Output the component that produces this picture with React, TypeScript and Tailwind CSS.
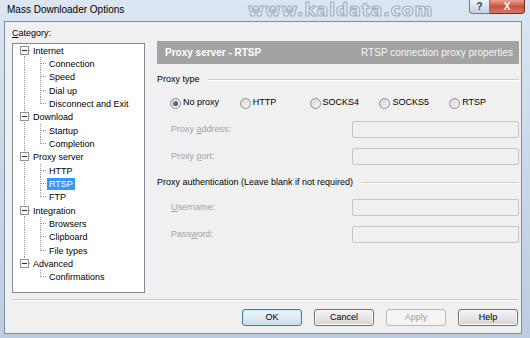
import React from "react";

type TreeNode = {
  label: string;
  level: 0 | 1;
  first?: boolean;
  last?: boolean;
  lastChild?: boolean;
  inLast?: boolean;
  selected?: boolean;
};

const nodes: TreeNode[] = [
  { label: "Internet", level: 0, first: true },
  { label: "Connection", level: 1 },
  { label: "Speed", level: 1 },
  { label: "Dial up", level: 1 },
  { label: "Disconnect and Exit", level: 1, lastChild: true },
  { label: "Download", level: 0 },
  { label: "Startup", level: 1 },
  { label: "Completion", level: 1, lastChild: true },
  { label: "Proxy server", level: 0 },
  { label: "HTTP", level: 1 },
  { label: "RTSP", level: 1, selected: true },
  { label: "FTP", level: 1, lastChild: true },
  { label: "Integration", level: 0 },
  { label: "Browsers", level: 1 },
  { label: "Clipboard", level: 1 },
  { label: "File types", level: 1, lastChild: true },
  { label: "Advanced", level: 0, last: true },
  { label: "Confirmations", level: 1, lastChild: true, inLast: true },
];

const dot = { stroke: "#9a9a9a", strokeWidth: 1, strokeDasharray: "1 1" };

const TreeRow = ({ n }: { n: TreeNode }) => (
  <div className="flex h-[13.33px] items-center">
    {n.level === 0 ? (
      <svg width="18" height="14" className="shrink-0" shapeRendering="crispEdges">
        <line x1="11.5" y1={n.first ? 6 : 0} x2="11.5" y2={n.last ? 7 : 14} {...dot} />
        <line x1="16" y1="6.5" x2="18" y2="6.5" {...dot} />
        <rect x="7.5" y="2.5" width="8" height="8" fill="#fbfbfb" stroke="#919191" />
        <line x1="9" y1="6.5" x2="14" y2="6.5" stroke="#1f2f4a" />
      </svg>
    ) : (
      <svg width="34" height="14" className="shrink-0" shapeRendering="crispEdges">
        {!n.inLast && <line x1="11.5" y1="0" x2="11.5" y2="14" {...dot} />}
        <line x1="27.5" y1="0" x2="27.5" y2={n.lastChild ? 7 : 14} {...dot} />
        <line x1="28" y1="6.5" x2="34" y2="6.5" {...dot} />
      </svg>
    )}
    <span
      className={`px-[2px] leading-[12px] ${
        n.selected ? "bg-[#3399ff] text-white" : "text-black"
      }`}
    >
      {n.label}
    </span>
  </div>
);

const Radio = ({ label, checked }: { label: string; checked?: boolean }) => (
  <div className="flex w-[70px] items-center">
    <div className="flex h-[11px] w-[11px] items-center justify-center rounded-full border border-[#8e8f8f] bg-linear-to-br from-[#d4d4d4] to-[#f8f8f8]">
      {checked && (
        <div className="h-[5px] w-[5px] rounded-full bg-linear-to-br from-[#6a9ad0] to-[#1c3f6e]" />
      )}
    </div>
    <span className="ml-[2px]">{label}</span>
  </div>
);

const Field = ({ label, top }: { label: React.ReactNode; top: string }) => (
  <div className={`${top} flex h-[17px] items-center justify-between pl-[14px]`}>
    <span className="text-[#a3a3a3]">{label}</span>
    <div className="h-[17px] w-[167px] rounded-[2px] border border-[#c3c7cc] bg-[#f0f0f0]" />
  </div>
);

const GroupTitle = ({ label, top }: { label: string; top: string }) => (
  <div className={`${top} flex h-[12px] items-center`}>
    <span>{label}</span>
    <div className="ml-[8px] h-[2px] flex-1 border-t border-b border-t-[#cfcfcf] border-b-white" />
  </div>
);

const Btn = ({
  label,
  kind,
}: {
  label: string;
  kind?: "default" | "disabled";
}) => {
  const look =
    kind === "default"
      ? "border-[#3c7fb1] bg-linear-to-b from-[#eef6fb] via-[#dfeaf2] to-[#cbdbe7] shadow-[inset_0_0_0_1px_#c4e5f6]"
      : kind === "disabled"
      ? "border-[#b5b9bc] bg-[#f4f4f4] text-[#a0a0a0]"
      : "border-[#707070] bg-linear-to-b from-[#f4f4f4] via-[#e6e6e6] to-[#d3d3d3] shadow-[inset_0_0_0_1px_#fcfcfc]";
  return (
    <div
      className={`flex h-[17px] w-[60px] items-center justify-center rounded-[3px] border text-[9px] ${look}`}
    >
      {label}
    </div>
  );
};

export default function App() {
  return (
    <div className="relative flex h-[338px] w-[530px] flex-col overflow-hidden bg-linear-to-b from-[#dbe6f2] via-[#c9d8e9] to-[#bccde2] font-['Liberation_Sans',Arial,sans-serif] text-[9px] text-black">
      {/* title bar */}
      <div className="relative flex h-[21px] shrink-0 items-start">
        <span className="mt-[4px] pl-[7px] text-[10px] leading-[12px] text-black">
          Mass Downloader Options
        </span>
        <span className="absolute left-[248px] top-[-2px] font-['DejaVu_Sans',sans-serif] text-[17px] font-bold tracking-[1px] text-[#e9eff5] [-webkit-text-stroke:1.2px_#a3b2c3]">
          www.kaldata.com
        </span>
        <div className="ml-auto mr-[5px] flex h-[14px]">
          <div className="flex h-[14px] w-[21px] items-center justify-center rounded-bl-[4px] border border-t-0 border-[#6d7f95] bg-linear-to-b from-[#eef3f8] to-[#c3d1e1] text-[10px] font-bold leading-none text-[#2d3e55]">
            ?
          </div>
          <div className="flex h-[14px] w-[35px] items-center justify-center rounded-br-[4px] border border-l-0 border-t-0 border-[#6b3027] bg-red-600 bg-linear-to-b from-[#e9a393] via-[#c7533d] to-[#d47a66] text-[10px] font-bold leading-none text-white">
            X
          </div>
        </div>
      </div>

      {/* client area */}
      <div className="ml-[4px] flex h-[313px] w-[518px] flex-col border border-[#7d8ea3] bg-[#f0f0f0]">
        <div className="flex pl-[7px] pt-[5px]">
          <div className="flex w-[133px] flex-col">
            <div className="h-[12px] leading-[12px]">
              <u>C</u>ategory:
            </div>
            <div className="mt-[4px] h-[250px] w-[133px] overflow-hidden border border-[#828790] bg-white">
              {nodes.map((n) => (
                <TreeRow key={n.label} n={n} />
              ))}
            </div>
          </div>

          <div className="ml-[12px] mt-[14px] flex w-[362px] flex-col">
            <div className="flex h-[23px] items-center justify-between bg-[#a3a3a3] pl-[8px] pr-[6px] text-white">
              <span className="text-[10px] font-bold">Proxy server - RTSP</span>
              <span className="text-[10px] text-[#f4f4f4]">RTSP connection proxy properties</span>
            </div>

            <GroupTitle label="Proxy type" top="mt-[10px]" />
            <div className="mt-[11px] flex h-[12px] items-center pl-[13px]">
              <Radio label="No proxy" checked />
              <Radio label="HTTP" />
              <Radio label="SOCKS4" />
              <Radio label="SOCKS5" />
              <Radio label="RTSP" />
            </div>

            <Field
              top="mt-[12px]"
              label={
                <>
                  Proxy <u>a</u>ddress:
                </>
              }
            />
            <Field
              top="mt-[10px]"
              label={
                <>
                  Proxy <u>p</u>ort:
                </>
              }
            />

            <GroupTitle label="Proxy authentication (Leave blank if not required)" top="mt-[12px]" />
            <Field
              top="mt-[10px]"
              label={
                <>
                  <u>U</u>sername:
                </>
              }
            />
            <Field
              top="mt-[10px]"
              label={
                <>
                  Pass<u>w</u>ord:
                </>
              }
            />
          </div>
        </div>

        <div className="ml-[7px] mt-[6px] h-[2px] w-[506px] border-t border-b border-t-[#c8c8c8] border-b-white" />

        <div className="mt-[8px] flex justify-end gap-[12px] pr-[3px]">
          <Btn label="OK" kind="default" />
          <Btn label="Cancel" />
          <Btn label="Apply" kind="disabled" />
          <Btn label="Help" />
        </div>
      </div>
    </div>
  );
}
